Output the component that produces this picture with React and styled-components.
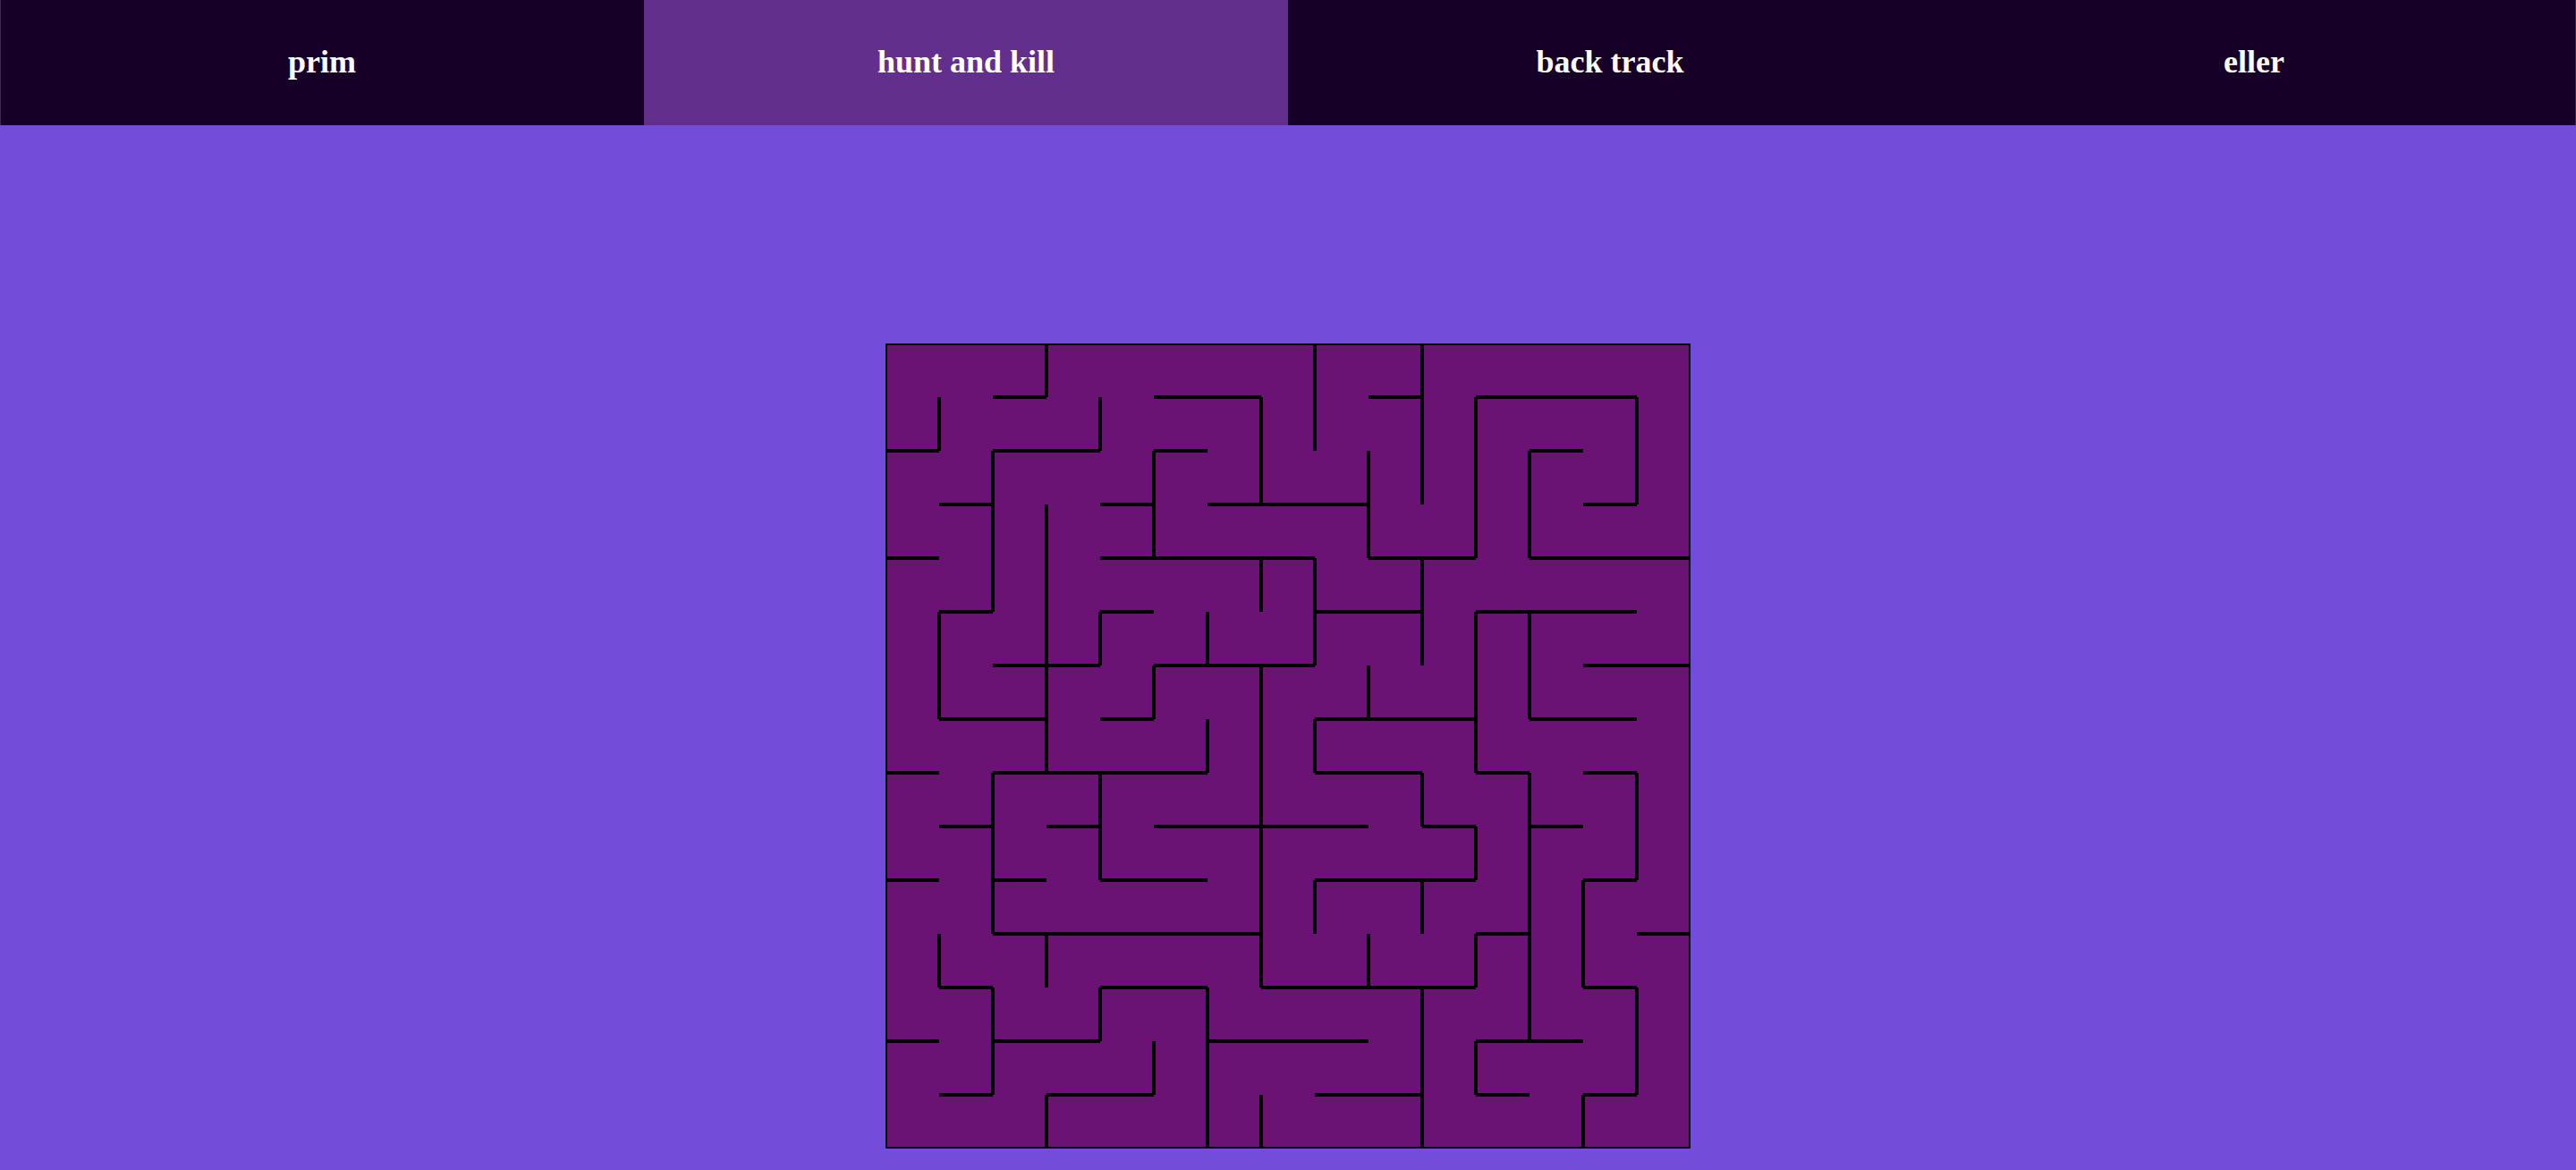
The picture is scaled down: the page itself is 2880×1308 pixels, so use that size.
import styled, { createGlobalStyle } from "styled-components";

const SIZE = 15;

// wall runs as [line, from, to], read off the maze in grid units
const horizontal = [
  [1, 2, 3], [1, 5, 7], [1, 9, 10], [1, 11, 14],
  [2, 0, 1], [2, 2, 4], [2, 5, 6], [2, 12, 13],
  [3, 1, 2], [3, 4, 5], [3, 6, 9], [3, 13, 14],
  [4, 0, 1], [4, 4, 8], [4, 9, 11], [4, 12, 15],
  [5, 1, 2], [5, 4, 5], [5, 8, 10], [5, 11, 14],
  [6, 2, 4], [6, 5, 8], [6, 13, 15],
  [7, 1, 3], [7, 4, 5], [7, 8, 11], [7, 12, 14],
  [8, 0, 1], [8, 2, 6], [8, 8, 10], [8, 11, 12], [8, 13, 14],
  [9, 1, 2], [9, 3, 4], [9, 5, 9], [9, 10, 11], [9, 12, 13],
  [10, 0, 1], [10, 2, 3], [10, 4, 6], [10, 8, 11], [10, 13, 14],
  [11, 2, 7], [11, 11, 12], [11, 14, 15],
  [12, 1, 2], [12, 4, 6], [12, 7, 11], [12, 13, 14],
  [13, 0, 1], [13, 2, 4], [13, 6, 9], [13, 11, 13],
  [14, 1, 2], [14, 3, 5], [14, 8, 10], [14, 11, 12], [14, 13, 14],
];

const vertical = [
  [1, 1, 2], [1, 5, 7], [1, 11, 12],
  [2, 2, 5], [2, 8, 11], [2, 12, 14],
  [3, 0, 1], [3, 3, 8], [3, 11, 12], [3, 14, 15],
  [4, 1, 2], [4, 5, 6], [4, 8, 10], [4, 12, 13],
  [5, 2, 4], [5, 6, 7], [5, 13, 14],
  [6, 5, 6], [6, 7, 8], [6, 12, 15],
  [7, 1, 3], [7, 4, 5], [7, 6, 12], [7, 14, 15],
  [8, 0, 2], [8, 4, 6], [8, 7, 8], [8, 10, 11],
  [9, 2, 4], [9, 6, 7], [9, 11, 12],
  [10, 0, 3], [10, 4, 6], [10, 8, 9], [10, 10, 11], [10, 12, 15],
  [11, 1, 4], [11, 5, 8], [11, 9, 10], [11, 11, 12], [11, 13, 14],
  [12, 2, 4], [12, 5, 7], [12, 8, 13],
  [13, 10, 12], [13, 14, 15],
  [14, 1, 3], [14, 8, 10], [14, 12, 14],
];

const hasWall = (runs, line, pos) =>
  runs.some(([l, from, to]) => l === line && pos >= from && pos < to);

const buildCells = () => {
  const cells = [];
  for (let row = 0; row < SIZE; row++) {
    for (let col = 0; col < SIZE; col++) {
      cells.push({
        key: `${row}-${col}`,
        top: row === 0 || hasWall(horizontal, row, col),
        bottom: row === SIZE - 1 || hasWall(horizontal, row + 1, col),
        left: col === 0 || hasWall(vertical, col, row),
        right: col === SIZE - 1 || hasWall(vertical, col + 1, row),
      });
    }
  }
  return cells;
};

const tabs = ["prim", "hunt and kill", "back track", "eller"];

const GlobalStyle = createGlobalStyle`
  html, body {
    margin: 0;
    padding: 0;
    background: #734cd9;
  }
`;

const Page = styled.div`
  min-height: 100vh;
  background: #734cd9;
  display: flex;
  flex-direction: column;
`;

const Tabs = styled.nav`
  display: grid;
  grid-template-columns: repeat(4, 1fr);
  height: 140px;
`;

const Tab = styled.div`
  display: flex;
  align-items: center;
  justify-content: center;
  padding-bottom: 2px;
  background: ${(props) => (props.$active ? "#62308c" : "#170028")};
  color: #fff;
  font-family: "Liberation Serif", "Times New Roman", serif;
  font-weight: 700;
  font-size: 36px;

  &:first-child {
    box-shadow: inset 1px 0 0 #3a2a50;
  }

  &:last-child {
    box-shadow: inset -1px 0 0 #3a2a50;
  }
`;

const Board = styled.main`
  display: flex;
  justify-content: center;
  padding-top: 244px;
`;

const Maze = styled.div`
  display: grid;
  grid-template-columns: repeat(${SIZE}, 60px);
  grid-auto-rows: 60px;
  background: #6b1374;
`;

const Cell = styled.div`
  box-sizing: border-box;
  border-style: solid;
  border-color: #000;
  border-top-width: ${(props) => (props.$top ? "2px" : "0")};
  border-right-width: ${(props) => (props.$right ? "2px" : "0")};
  border-bottom-width: ${(props) => (props.$bottom ? "2px" : "0")};
  border-left-width: ${(props) => (props.$left ? "2px" : "0")};
`;

const App = () => (
  <Page>
    <GlobalStyle />
    <Tabs>
      {tabs.map((name) => (
        <Tab key={name} $active={name === "hunt and kill"}>{name}</Tab>
      ))}
    </Tabs>
    <Board>
      <Maze>
        {buildCells().map(({ key, top, right, bottom, left }) => (
          <Cell key={key} $top={top} $right={right} $bottom={bottom} $left={left} />
        ))}
      </Maze>
    </Board>
  </Page>
);

export default App;
